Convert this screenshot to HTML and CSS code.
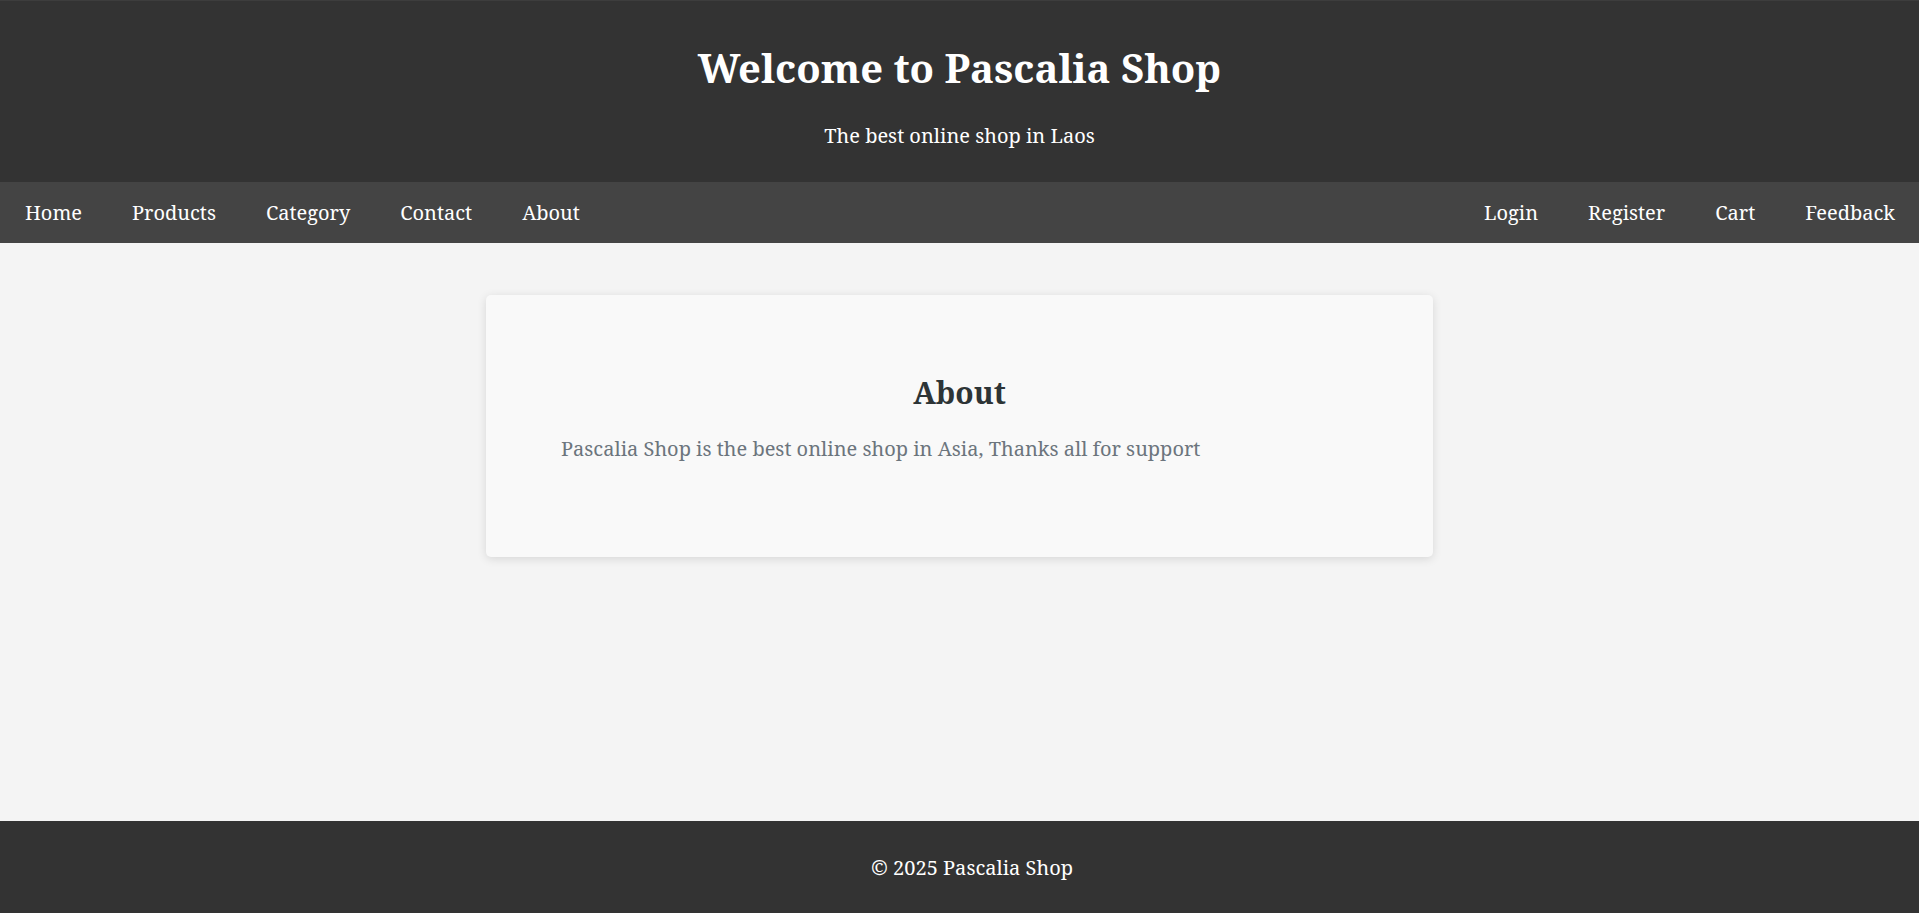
FILE: index.html
```html
<!DOCTYPE html>
<html lang="en">
<head>
<meta charset="utf-8">
<title>Pascalia Shop - About</title>
<link rel="stylesheet" href="styles.css">
</head>
<body>
  <header class="site-header">
    <h1 class="site-title">Welcome to Pascalia Shop</h1>
    <p class="site-tagline">The best online shop in Laos</p>
  </header>
  <nav class="main-nav">
    <div class="nav-group">
      <a href="#" class="nav-link">Home</a>
      <a href="#" class="nav-link">Products</a>
      <a href="#" class="nav-link">Category</a>
      <a href="#" class="nav-link">Contact</a>
      <a href="#" class="nav-link">About</a>
    </div>
    <div class="nav-group nav-group-right">
      <a href="#" class="nav-link">Login</a>
      <a href="#" class="nav-link">Register</a>
      <a href="#" class="nav-link">Cart</a>
      <a href="#" class="nav-link">Feedback</a>
    </div>
  </nav>
  <main class="page-main">
    <section class="about-card">
      <h2 class="about-title">About</h2>
      <p class="about-text">Pascalia Shop is the best online shop in Asia, Thanks all for support</p>
    </section>
  </main>
  <footer class="site-footer">
    <p class="footer-text">&copy; 2025 Pascalia Shop</p>
  </footer>
</body>
</html>
```
FILE: styles.css
```css
* {
  box-sizing: border-box;
}

html, body {
  margin: 0;
  padding: 0;
}

body {
  font-family: "Noto Serif", "DejaVu Serif", serif;
  font-size: 20px;
  min-height: 100vh;
  display: flex;
  flex-direction: column;
  background: #f4f4f4;
}

.site-header {
  background: #333333;
  color: #ffffff;
  text-align: center;
  padding: 43px 20px 32px;
  border-top: 1px solid #3d3d3d;
}

.site-title {
  margin: 0 0 31px;
  font-size: 40px;
  line-height: 47px;
  font-weight: 700;
}

.site-tagline {
  margin: 0;
  font-size: 20px;
  line-height: 28px;
}

.main-nav {
  background: #444444;
  display: flex;
  justify-content: space-between;
  height: 61px;
}

.nav-group {
  display: flex;
}

.nav-group-right {
  margin-right: -1px;
}

.nav-link {
  color: #ffffff;
  text-decoration: none;
  font-size: 20px;
  line-height: 61px;
  padding: 0 25px;
}

.page-main {
  flex: 1;
  display: flex;
  flex-direction: column;
  align-items: center;
  padding-top: 52px;
}

.about-card {
  width: 947px;
  height: 262px;
  background: #f9f9f9;
  border-radius: 5px;
  box-shadow: 0 2px 10px rgba(0, 0, 0, 0.12);
  padding: 81px 75px 0;
}

.about-title {
  margin: 0 0 25px;
  text-align: center;
  font-size: 30px;
  line-height: 34px;
  font-weight: 700;
  color: #2d3436;
}

.about-text {
  margin: 0;
  font-size: 20px;
  line-height: 28px;
  color: #6c757d;
}

.site-footer {
  background: #333333;
  color: #ffffff;
  text-align: center;
  padding: 33px 20px 31px 45px;
}

.footer-text {
  margin: 0;
  font-size: 20px;
  line-height: 28px;
}
```
